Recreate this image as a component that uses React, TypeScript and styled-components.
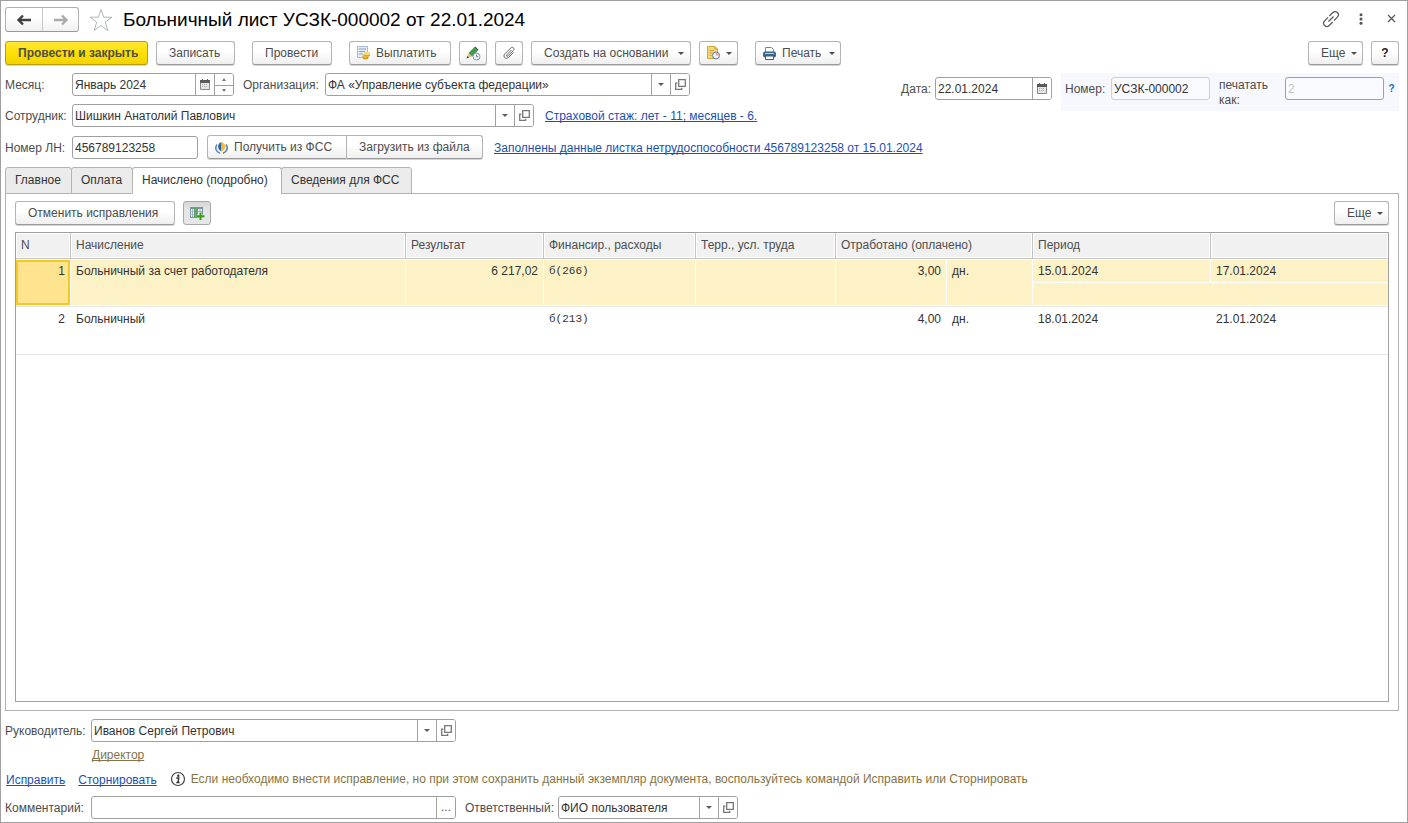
import React, { useState } from "react";
import styled, { createGlobalStyle, css } from "styled-components";

const GlobalStyle = createGlobalStyle`
  *, *::before, *::after { box-sizing: border-box; }
  body {
    margin: 0;
    background: #fff;
    color: #4d4d4d;
    font-family: "Liberation Sans", Arial, sans-serif;
    font-size: 12px;
    line-height: 15px;
  }
  button, input { font: inherit; color: inherit; }
  button { cursor: pointer; }
  svg { flex: none; }
`;

const Window = styled.main`
  display: flex;
  flex-direction: column;
  min-height: 100vh;
  padding: 6px 8px 3px 4px;
  border: 1px solid #a0a0a0;
`;

const TitleBar = styled.header`
  display: flex;
  align-items: center;
  height: 25px;
`;

const NavGroup = styled.div`
  display: flex;
  height: 25px;
  border: 1px solid #b0b0b0;
  border-bottom-color: #999;
  border-radius: 3px;
  background: linear-gradient(#fff 40%, #f0f0f0);
`;

const NavButton = styled.button`
  display: flex;
  align-items: center;
  justify-content: center;
  width: 36px;
  padding: 0;
  border: 0;
  background: none;
  & + & { border-left: 1px solid #c8c8c8; }
`;

const PlainButton = styled.button`
  display: flex;
  align-items: center;
  justify-content: center;
  width: 24px;
  height: 24px;
  padding: 0;
  border: 0;
  background: none;
`;

const StarButton = styled(PlainButton)`
  margin-left: 10px;
`;

const Title = styled.h1`
  margin: 0 0 0 10px;
  color: #000;
  font-size: 19px;
  line-height: 24px;
  font-weight: 400;
`;

const WindowActions = styled.div`
  display: flex;
  gap: 6px;
  margin: 0 -4px 2px auto;
`;

const Bar = styled.div`
  display: flex;
  gap: 8px;
`;

const MainBar = styled(Bar)`
  margin-top: 9px;
`;

const Cluster = styled.div<{ $end?: boolean }>`
  display: flex;
  gap: 8px;
  margin-right: 9px;
  ${(p) => p.$end && css`margin: 0 0 0 auto;`}
`;

const Caret = styled.span`
  border: 3px solid transparent;
  border-top-color: currentColor;
  border-bottom: 0;
`;

const Button = styled.button<{ $kind?: "primary" | "pressed"; $width: number; $icon?: "lead" | "only" }>`
  display: flex;
  align-items: center;
  justify-content: ${(p) => (p.$icon === "only" ? "center" : "flex-start")};
  gap: 6px;
  height: 24px;
  width: ${(p) => p.$width}px;
  padding: ${(p) => (p.$icon === "only" ? "0" : p.$icon === "lead" ? "0 5px 0 7px" : "0 6px 0 12px")};
  white-space: nowrap;
  border: 1px solid #b3b3b3;
  border-bottom-color: #999;
  border-radius: 3px;
  box-shadow: 0 1px 0 #d4d4d4;
  background: linear-gradient(#fff 40%, #efefef);
  & > ${Caret} { margin-left: auto; }
  ${(p) => p.$kind === "primary" && css`
    font-weight: 700;
    border-color: #b8a000;
    background: linear-gradient(#ffe838, #ffe000 50%, #f2d300);
  `}
  ${(p) => p.$kind === "pressed" && css`
    border-color: #a8a8a8;
    box-shadow: none;
    background: linear-gradient(#d6d6d6, #e6e6e6 40%);
  `}
`;

const HelpButton = styled(Button)`
  color: #222;
  font-weight: 700;
`;

const HeaderFields = styled.section`
  display: flex;
  justify-content: space-between;
  margin-top: 8px;
`;

const Stack = styled.div`
  display: flex;
  flex-direction: column;
  gap: 8px;
`;

const Row = styled.div`
  display: flex;
  align-items: center;
`;

const SickRow = styled(Row)`
  margin-top: 8px;
`;

const Label = styled.label<{ $width?: number; $gap?: number }>`
  flex: none;
  width: ${(p) => (p.$width ? `${p.$width}px` : "auto")};
  margin-left: ${(p) => p.$gap ?? 0}px;
  padding-top: 2px;
  white-space: nowrap;
`;

const Box = styled.div<{ $width: number; $tone?: "locked" | "muted" }>`
  display: flex;
  flex: none;
  width: ${(p) => p.$width}px;
  height: 23px;
  overflow: hidden;
  border: 1px solid #a0a0a0;
  border-radius: 3px;
  color: #333;
  background: ${(p) => (p.$tone ? "#f9faff" : "#fff")};
  ${(p) => p.$tone === "locked" && css`border-color: #d0d0d0;`}
  ${(p) => p.$tone === "muted" && css`color: #c4c4c4;`}
`;

const Input = styled.input`
  flex: 1;
  min-width: 0;
  padding: 2px 2px 0;
  border: 0;
  outline: 0;
  background: none;
`;

const BoxButton = styled.button`
  display: flex;
  flex: none;
  align-items: center;
  justify-content: center;
  width: 19px;
  padding: 0;
  border: 0;
  border-left: 1px solid #a0a0a0;
  background: #fff;
  color: #5c5c5c;
`;

const Spinner = styled.div`
  display: grid;
  grid-template-rows: 1fr 1fr;
  width: 19px;
  border-left: 1px solid #a0a0a0;
`;

const SpinButton = styled.button<{ $down?: boolean }>`
  display: flex;
  align-items: center;
  justify-content: center;
  padding: 0;
  border: 0;
  background: #fff;
  &::after {
    content: "";
    border: 2px solid transparent;
    border-bottom: 3px solid #777;
    border-top: 0;
  }
  ${(p) => p.$down && css`
    border-top: 1px solid #a0a0a0;
    &::after { border: 2px solid transparent; border-top: 3px solid #777; border-bottom: 0; }
  `}
`;

const Link = styled.a<{ $gap?: number; $tone?: "muted" }>`
  margin-left: ${(p) => p.$gap ?? 0}px;
  padding-top: ${(p) => (p.$tone === "muted" ? 0 : 2)}px;
  color: ${(p) => (p.$tone === "muted" ? "#857448" : "#1a4fb5")};
  text-decoration: underline;
  text-decoration-thickness: 1px;
  text-underline-offset: 1px;
  text-decoration-skip-ink: none;
  white-space: nowrap;
`;

const Requisites = styled.div`
  display: flex;
  align-items: flex-start;
  height: 38px;
`;

const DatePart = styled(Row)`
  gap: 4px;
  margin-top: 4px;
  margin-right: 9px;
`;

const NumberPart = styled.div`
  display: flex;
  flex: none;
  align-items: flex-start;
  height: 38px;
  padding: 4px 0 4px 4px;
  background: #f7f8fe;
`;

const WrappedLabel = styled.label`
  width: 66px;
  margin-left: 9px;
  padding-top: 1px;
`;

const Help = styled.button`
  width: 15px;
  height: 22px;
  padding: 0;
  border: 0;
  background: none;
  color: #0a70c4;
  font-size: 10px;
  font-weight: 700;
`;

const ButtonPair = styled.div`
  display: flex;
  margin-left: 9px;
  & > :first-child { border-radius: 3px 0 0 3px; }
  & > :last-child { border-radius: 0 3px 3px 0; border-left: 0; }
`;

const Tabs = styled.nav`
  display: flex;
  margin-top: 8px;
  position: relative;
`;

const Tab = styled.button<{ $active?: boolean; $width: number }>`
  width: ${(p) => p.$width}px;
  height: 27px;
  margin-right: -1px;
  margin-bottom: -1px;
  padding: 0 0 0 9px;
  text-align: left;
  white-space: nowrap;
  border: 1px solid #b3b3b3;
  border-radius: 3px 3px 0 0;
  background: #ebebeb;
  color: #333;
  ${(p) => p.$active && css`
    background: #fff;
    border-bottom-color: #fff;
  `}
`;

const Panel = styled.section`
  display: flex;
  flex: 1;
  flex-direction: column;
  padding: 7px 9px 8px;
  border: 1px solid #b3b3b3;
`;

const TableFrame = styled.div`
  flex: 1;
  margin-top: 7px;
  border: 1px solid #a0a0a0;
`;

const Table = styled.table`
  width: 100%;
  table-layout: fixed;
  border-collapse: separate;
  border-spacing: 0;
`;

const HeadCell = styled.th`
  height: 26px;
  padding: 0 5px;
  text-align: left;
  font-weight: 400;
  background: #f1f1f1;
  border-right: 1px solid #c4c4c4;
  border-bottom: 1px solid #c4c4c4;
  box-shadow: inset 0 0 0 1px #fff;
  &:last-child { border-right: 0; }
`;

const Cell = styled.td<{ $selected?: boolean; $right?: boolean; $current?: boolean; $mono?: boolean }>`
  height: 48px;
  padding: 5px 5px 3px;
  vertical-align: top;
  color: #333;
  text-align: ${(p) => (p.$right ? "right" : "left")};
  border-bottom: 1px solid #e5e5e5;
  border-right: 1px solid transparent;
  ${(p) => p.$selected && css`
    background: #fdf1c6;
    background-clip: padding-box;
    border-right-color: #fff;
    box-shadow: inset 0 1px 0 #fff, inset 0 -1px 0 #fff;
  `}
  ${(p) => p.$current && css`
    background: #ffe48f;
    box-shadow: inset 0 1px 0 #fff, inset 0 -1px 0 #fff, inset 0 3px 0 #f8c822, inset 0 -3px 0 #f8c822,
      inset 2px 0 0 #f8c822, inset -2px 0 0 #f8c822;
  `}
  ${(p) => p.$mono && css`
    font-family: "Liberation Mono", "Courier New", monospace;
    font-size: 11px;
  `}
`;

const DateCell = styled(Cell)`
  height: 24px;
  border-bottom-color: transparent;
  ${(p) => p.$selected && css`box-shadow: inset 0 1px 0 #fff;`}
  &:last-child { border-right: 0; }
`;

const LowerCell = styled(Cell)`
  height: 24px;
  padding: 0;
  border-right: 0;
  ${(p) => p.$selected && css`box-shadow: inset 0 -1px 0 #fff;`}
`;

const Footer = styled.footer`
  display: flex;
  flex-direction: column;
  margin-top: 8px;
`;

const PositionRow = styled(Row)`
  height: 26px;
`;

const NoteRow = styled(Row)`
  height: 22px;
  margin-bottom: 6px;
`;

const Note = styled.p`
  margin: 0 0 0 5px;
  color: #857448;
`;

const InfoMark = styled.svg`
  margin-left: 13px;
`;

const ArrowIcon = ({ right }: { right?: boolean }) => (
  <svg width="16" height="12" viewBox="0 0 16 12" fill="none" stroke={right ? "#aaa" : "#404040"} strokeWidth="2.400">
    {right ? <path d="M1 6h12M9 1.500L13.500 6 9 10.500" /> : <path d="M15 6H3M7 1.500L2.500 6 7 10.500" />}
  </svg>
);

const StarIcon = () => (
  <svg width="24" height="24" viewBox="0 0 24 24" fill="none" stroke="#b0b4b8" strokeWidth="1">
    <path d="M12 1.500l2.700 7.700h8.300l-6.700 5 2.500 8.300-6.800-5-6.800 5 2.500-8.300-6.700-5h8.300z" />
  </svg>
);

const LinkIcon = () => (
  <svg width="18" height="18" viewBox="0 0 18 18" fill="none" stroke="#555" strokeWidth="1.200">
    <path d="M7.300 6L10.800 2.500a3.200 3.200 0 0 1 4.600 4.600L11.900 10.600" />
    <path d="M10.700 12L7.200 15.500a3.200 3.200 0 0 1-4.600-4.600L6.100 7.400" />
    <path d="M6.500 11.500l5-5" />
  </svg>
);

const DotsIcon = () => (
  <svg width="4" height="12" viewBox="0 0 4 12" fill="#555">
    <circle cx="2" cy="1.700" r="1.500" /><circle cx="2" cy="6" r="1.500" /><circle cx="2" cy="10.300" r="1.500" />
  </svg>
);

const CloseIcon = () => (
  <svg width="9" height="9" viewBox="0 0 9 9" stroke="#555" strokeWidth="1.200">
    <path d="M1 1l7 7M8 1L1 8" />
  </svg>
);

const PayIcon = () => (
  <svg width="13" height="14" viewBox="0 0 13 14">
    <path d="M.5.5h10v11H.5z" fill="#e3ecf4" stroke="#a9bccd" />
    <path d="M2 3h7M2 5.500h6M2 8h4" stroke="#88a5be" />
    <path d="M5.500 10v1.500c0 2.600 6 2.600 6 0V10z" fill="#d2921a" />
    <ellipse cx="8.500" cy="10" rx="3" ry="1.700" fill="#f2c243" />
    <path d="M7 7.500V9c0 2 6 2 6 0V7.500z" fill="#dca024" />
    <ellipse cx="10" cy="7.500" rx="3" ry="1.700" fill="#f9da74" />
  </svg>
);

const PencilIcon = () => (
  <svg width="15" height="15" viewBox="0 0 15 15">
    <path d="M2.500 7L8 1.500 11.500 5 6 10.500z" fill="#3f9a4b" />
    <path d="M8 1.500L9.300.5l3.200 3.200-1 1.300z" fill="#2b6d3a" />
    <path d="M2.500 7L6 10.500 1 12z" fill="#e9b98a" />
    <path d="M.5 12.500l1-2.500 1.500 1.500z" fill="#333" />
    <circle cx="10.500" cy="10.500" r="3.500" fill="#eef3f8" stroke="#8298ae" />
    <path d="M10.500 8.500v2.200h1.700" fill="none" stroke="#6d8298" />
  </svg>
);

const ClipIcon = () => (
  <svg width="14" height="14" viewBox="0 0 14 14" fill="none" stroke="#666" strokeWidth="1">
    <path d="M9.500 4L4.800 8.700c-.9.9.2 2.100 1.200 1.200l5.300-5.300c2-2-.6-4.500-2.600-2.600L2.900 7.800c-2.700 2.700 1 6.100 3.600 3.600l5-5" />
  </svg>
);

const NoteIcon = () => (
  <svg width="13" height="14" viewBox="0 0 13 14">
    <path d="M.5.500H8L10.500 3v9.500H.5z" fill="#f3d676" stroke="#cfab3f" />
    <path d="M8 .5V3h2.500M2.500 4.500H7M2.500 7h3M2.500 9.500h2" fill="none" stroke="#c9a43a" />
    <circle cx="9" cy="9.500" r="3.500" fill="#eef3f8" stroke="#5b7ba0" />
    <path d="M9 9.500V6.500A3 3 0 0 1 12 9.500z" fill="#e8a49a" />
  </svg>
);

const PrinterIcon = () => (
  <svg width="13" height="13" viewBox="0 0 13 13">
    <path d="M2.500.5h6L10.500 2.500V6h-8z" fill="#fff" stroke="#6f8699" />
    <rect y="4.500" width="13" height="6" rx="2" fill="#3f6788" />
    <path d="M2 6.500h9" stroke="#b9d0e2" />
    <path d="M2.500 9h8v3.500h-8z" fill="#fff" stroke="#3f5f7b" />
  </svg>
);

const FundIcon = () => (
  <svg width="13" height="13" viewBox="0 0 13 13" fill="none">
    <path d="M2 3.500C-.3 6.500.8 11 5 12.200" stroke="#5d8fc9" strokeWidth="1.600" />
    <path d="M11 3.500c2.300 3 1.200 7.500-3 8.700" stroke="#5d7fae" strokeWidth="1.600" />
    <path d="M6.500 1C2 2.500 2 8.500 6.500 10.500z" fill="#2f62a8" />
    <path d="M6.500 1c5 1.500 5 7.500 0 9.500z" fill="#f5bd35" />
  </svg>
);

const CalendarIcon = () => (
  <svg width="11" height="11" viewBox="0 0 11 11">
    <path d="M.5 2h9v8.500h-9z" fill="#e6e6e6" stroke="#888" />
    <path d="M0 1h10v3H0z" fill="#5a5a5a" />
    <path d="M2.500 0v2M7.500 0v2" stroke="#5a5a5a" />
    <path d="M2 5.500h6M2 7.500h6" stroke="#aaa" strokeDasharray="1 1" />
  </svg>
);

const OpenIcon = () => (
  <svg width="11" height="11" viewBox="0 0 11 11" fill="none" stroke="#777" strokeWidth="1.300">
    <path d="M3.700.7h6.600v6.600H3.700z" />
    <path d="M2.500 4.200H.7v6.100h6V8.700" />
  </svg>
);

const ColumnsIcon = () => (
  <svg width="15" height="14" viewBox="0 0 15 14">
    <path d="M.5 1.500h12v10H.5z" fill="#fff" stroke="#7893a8" />
    <path d="M0 1h13v2H0z" fill="#7893a8" />
    <path d="M4 1h4v11H4z" fill="#5fa86a" />
    <path d="M2.500 3v8M10 3v4M0 5.500h4M0 8.500h4M8 5.500h4" stroke="#9fb4c4" />
    <path d="M10.500 6v8M7 10h8" stroke="#e6e6e6" strokeWidth="3" />
    <path d="M10.500 6.500V14M7 10.200h7.500" stroke="#35a012" strokeWidth="2" />
  </svg>
);

const RefButtons = ({ name }: { name: string }) => (
  <>
    <BoxButton aria-label={`Выбрать: ${name}`}><Caret /></BoxButton>
    <BoxButton aria-label={`Открыть: ${name}`}><OpenIcon /></BoxButton>
  </>
);

const TABS = [
  { name: "Главное", width: 67 },
  { name: "Оплата", width: 62 },
  { name: "Начислено (подробно)", width: 150 },
  { name: "Сведения для ФСС", width: 131 },
];

const HEADERS = ["N", "Начисление", "Результат", "Финансир., расходы", "Терр., усл. труда"];

const ROWS = [
  { n: 1, name: "Больничный за счет работодателя", sum: "6 217,02", fin: "б(266)", days: "3,00", from: "15.01.2024", to: "17.01.2024" },
  { n: 2, name: "Больничный", sum: "", fin: "б(213)", days: "4,00", from: "18.01.2024", to: "21.01.2024" },
];

export default function App() {
  const [tab, setTab] = useState(2);
  const [current, setCurrent] = useState(1);

  return (
    <>
      <GlobalStyle />
      <Window>
        <TitleBar>
          <NavGroup>
            <NavButton aria-label="Назад"><ArrowIcon /></NavButton>
            <NavButton aria-label="Вперед"><ArrowIcon right /></NavButton>
          </NavGroup>
          <StarButton aria-label="В избранное"><StarIcon /></StarButton>
          <Title>Больничный лист УСЗК-000002 от 22.01.2024</Title>
          <WindowActions>
            <PlainButton aria-label="Ссылка"><LinkIcon /></PlainButton>
            <PlainButton aria-label="Меню"><DotsIcon /></PlainButton>
            <PlainButton aria-label="Закрыть"><CloseIcon /></PlainButton>
          </WindowActions>
        </TitleBar>

        <MainBar>
          <Cluster>
            <Button $kind="primary" $width={143}>Провести и закрыть</Button>
            <Button $width={79}>Записать</Button>
          </Cluster>
          <Cluster><Button $width={80}>Провести</Button></Cluster>
          <Cluster>
            <Button $icon="lead" $width={102}><PayIcon />Выплатить</Button>
            <Button $icon="only" $width={28} aria-label="Изменить"><PencilIcon /></Button>
            <Button $icon="only" $width={28} aria-label="Файлы"><ClipIcon /></Button>
            <Button $width={160}>Создать на основании<Caret /></Button>
            <Button $icon="lead" $width={39} aria-label="Напоминания"><NoteIcon /><Caret /></Button>
          </Cluster>
          <Button $icon="lead" $width={86}><PrinterIcon />Печать<Caret /></Button>
          <Cluster $end>
            <Button $width={55}>Еще<Caret /></Button>
            <HelpButton $icon="only" $width={28}>?</HelpButton>
          </Cluster>
        </MainBar>

        <HeaderFields>
          <Stack>
            <Row>
              <Label htmlFor="month" $width={67}>Месяц:</Label>
              <Box $width={162}>
                <Input id="month" defaultValue="Январь 2024" />
                <BoxButton aria-label="Календарь"><CalendarIcon /></BoxButton>
                <Spinner>
                  <SpinButton aria-label="Следующий месяц" />
                  <SpinButton $down aria-label="Предыдущий месяц" />
                </Spinner>
              </Box>
              <Label htmlFor="org" $width={82} $gap={9}>Организация:</Label>
              <Box $width={365}>
                <Input id="org" defaultValue="ФА «Управление субъекта федерации»" />
                <RefButtons name="Организация" />
              </Box>
            </Row>
            <Row>
              <Label htmlFor="person" $width={67}>Сотрудник:</Label>
              <Box $width={462}>
                <Input id="person" defaultValue="Шишкин Анатолий Павлович" />
                <RefButtons name="Сотрудник" />
              </Box>
              <Link href="#seniority" $gap={11}>Страховой стаж: лет - 11; месяцев - 6.</Link>
            </Row>
          </Stack>
          <Requisites>
            <DatePart>
              <Label htmlFor="date">Дата:</Label>
              <Box $width={117}>
                <Input id="date" defaultValue="22.01.2024" />
                <BoxButton aria-label="Календарь"><CalendarIcon /></BoxButton>
              </Box>
            </DatePart>
            <NumberPart>
              <Row>
                <Label htmlFor="number" $width={46}>Номер:</Label>
                <Box $width={99} $tone="locked"><Input id="number" readOnly value="УСЗК-000002" /></Box>
              </Row>
              <WrappedLabel htmlFor="print-as">печатать как:</WrappedLabel>
              <Box $width={99} $tone="muted"><Input id="print-as" defaultValue="2" /></Box>
              <Help aria-label="Подсказка">?</Help>
            </NumberPart>
          </Requisites>
        </HeaderFields>

        <SickRow>
          <Label htmlFor="sheet" $width={67}>Номер ЛН:</Label>
          <Box $width={126}><Input id="sheet" defaultValue="456789123258" /></Box>
          <ButtonPair>
            <Button $icon="lead" $width={140}><FundIcon />Получить из ФСС</Button>
            <Button $width={136}>Загрузить из файла</Button>
          </ButtonPair>
          <Link href="#sheet-data" $gap={11}>Заполнены данные листка нетрудоспособности 456789123258 от 15.01.2024</Link>
        </SickRow>

        <Tabs>
          {TABS.map((t, i) => (
            <Tab key={t.name} $width={t.width} $active={i === tab} onClick={() => setTab(i)}>{t.name}</Tab>
          ))}
        </Tabs>
        <Panel>
          <Bar>
            <Button $width={160}>Отменить исправления</Button>
            <Button $icon="only" $width={28} $kind="pressed" aria-label="Показать детали"><ColumnsIcon /></Button>
            <Cluster $end><Button $width={55}>Еще<Caret /></Button></Cluster>
          </Bar>
          <TableFrame>
            <Table>
              <colgroup>
                <col width="55" />
                <col />
                <col width="138" />
                <col width="152" />
                <col width="140" />
                <col width="111" />
                <col width="86" />
                <col width="178" />
                <col width="177" />
              </colgroup>
              <thead>
                <tr>
                  {HEADERS.map((h) => <HeadCell key={h}>{h}</HeadCell>)}
                  <HeadCell colSpan={2}>Отработано (оплачено)</HeadCell>
                  <HeadCell>Период</HeadCell>
                  <HeadCell />
                </tr>
              </thead>
              {ROWS.map((r) => {
                const on = r.n === current;
                return (
                  <tbody key={r.n} onClick={() => setCurrent(r.n)}>
                    <tr>
                      <Cell rowSpan={2} $right $selected={on} $current={on}>{r.n}</Cell>
                      <Cell rowSpan={2} $selected={on}>{r.name}</Cell>
                      <Cell rowSpan={2} $right $selected={on}>{r.sum}</Cell>
                      <Cell rowSpan={2} $mono $selected={on}>{r.fin}</Cell>
                      <Cell rowSpan={2} $selected={on} />
                      <Cell rowSpan={2} $right $selected={on}>{r.days}</Cell>
                      <Cell rowSpan={2} $selected={on}>дн.</Cell>
                      <DateCell $selected={on}>{r.from}</DateCell>
                      <DateCell $selected={on}>{r.to}</DateCell>
                    </tr>
                    <tr><LowerCell colSpan={2} $selected={on} /></tr>
                  </tbody>
                );
              })}
            </Table>
          </TableFrame>
        </Panel>

        <Footer>
          <Row>
            <Label htmlFor="head" $width={86}>Руководитель:</Label>
            <Box $width={365}>
              <Input id="head" defaultValue="Иванов Сергей Петрович" />
              <RefButtons name="Руководитель" />
            </Box>
          </Row>
          <PositionRow><Link href="#position" $gap={87} $tone="muted">Директор</Link></PositionRow>
          <NoteRow>
            <Link href="#fix" $gap={1}>Исправить</Link>
            <Link href="#storno" $gap={13}>Сторнировать</Link>
            <InfoMark width="16" height="16" viewBox="0 0 16 16">
              <circle cx="8" cy="8" r="6.500" fill="none" stroke="#444" strokeWidth="1.200" />
              <circle cx="8.300" cy="4.700" r="1.200" fill="#333" />
              <path d="M6.300 7h2.400l-.6 4.500h1.500M6.300 11.500h2" fill="none" stroke="#333" strokeWidth="1.400" />
            </InfoMark>
            <Note>Если необходимо внести исправление, но при этом сохранить данный экземпляр документа, воспользуйтесь командой Исправить или Сторнировать</Note>
          </NoteRow>
          <Row>
            <Label htmlFor="comment" $width={86}>Комментарий:</Label>
            <Box $width={365}>
              <Input id="comment" />
              <BoxButton aria-label="Редактировать комментарий">...</BoxButton>
            </Box>
            <Label htmlFor="owner" $width={93} $gap={9}>Ответственный:</Label>
            <Box $width={180}>
              <Input id="owner" defaultValue="ФИО пользователя" />
              <RefButtons name="Ответственный" />
            </Box>
          </Row>
        </Footer>
      </Window>
    </>
  );
}
